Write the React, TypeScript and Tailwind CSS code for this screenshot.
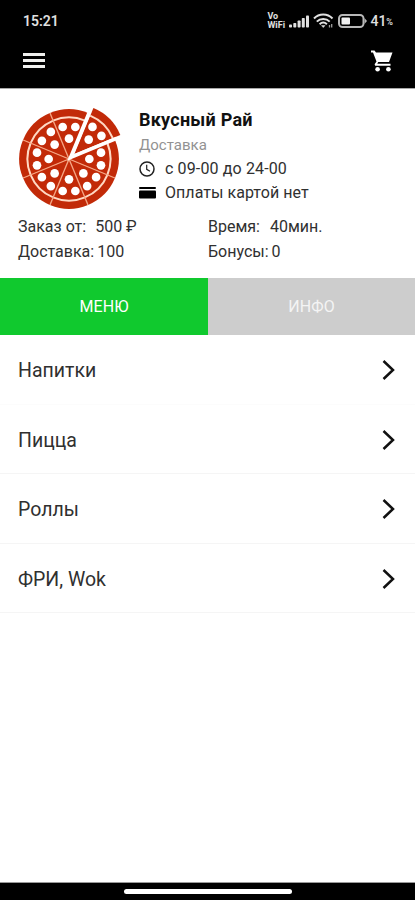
const categories = ["Напитки", "Пицца", "Роллы", "ФРИ, Wok"]

const slices = [0, 45, 90, 135, 180, 225, 270, 315]

function PizzaSlice() {
  return (
    <>
      <path d="M0 0 L-57 -138 A149 149 0 0 1 57 -138 Z" fill="#c22a08" />
      <path d="M-48 -115 A125 125 0 0 1 48 -115" fill="none" stroke="#ffd9c4" strokeWidth="6" />
      <circle cx="0" cy="-61" r="13" fill="#fff" />
      <circle cx="-19" cy="-96" r="13" fill="#fff" />
      <circle cx="19" cy="-96" r="13" fill="#fff" />
    </>
  )
}

function PizzaLogo() {
  return (
    <svg className="h-[106px] w-[106px] shrink-0" viewBox="-159 -159 318 318">
      {slices.map((angle) => {
        const shift = angle === 45 ? "translate(16 -15) " : ""
        return (
          <g key={angle} transform={`${shift}rotate(${angle})`}>
            <PizzaSlice />
          </g>
        )
      })}
      {/* cuts between the slices that stay in place */}
      {[112.5, 157.5, 202.5, 247.5, 292.5, 337.5].map((angle) => (
        <path key={angle} d="M0 0 V-149" stroke="#f5a583" strokeWidth="4" transform={`rotate(${angle})`} />
      ))}
      {/* gap around the pulled out slice */}
      <path d="M62 -143 L5 -5 L143 -62" fill="none" stroke="#fff" strokeWidth="11" />
    </svg>
  )
}

function StatusBar() {
  return (
    <div className="flex h-[41px] items-center justify-between pl-[23px] pr-[22px] text-[#e0e0e0]">
      <span className="text-[14px] font-semibold leading-none">15:21</span>
      <div className="flex items-center">
        <div className="w-[22px] text-[9px] font-bold leading-[8.5px]">
          <div>Vo</div>
          <div>WiFi</div>
        </div>
        <svg className="h-[14px] w-[20px]" viewBox="0 0 20 14" fill="currentColor">
          <rect x="0" y="10.5" width="3" height="3" rx="0.8" />
          <rect x="4.3" y="9" width="3" height="4.5" rx="0.8" />
          <rect x="8.6" y="6.5" width="3" height="7" rx="0.8" />
          <rect x="12.8" y="4" width="3" height="9.5" rx="0.8" />
          <rect x="17" y="1.5" width="3" height="12" rx="0.8" />
        </svg>
        <svg className="ml-[4px] h-[16px] w-[21px]" viewBox="0 0 21 16" fill="none" stroke="currentColor" strokeWidth="2">
          <path d="M1 5.5 C6 0.2 14.5 0.2 19.5 5.5" />
          <path d="M3.8 8.6 C7.3 5 13.2 5 16.7 8.6" />
          <path d="M6.6 11.3 C8.8 9.2 11.7 9.2 13.9 11.3" />
          <path d="M8.5 12.6 L10.25 14.6 L12 12.6 Z" fill="currentColor" strokeWidth="0.5" />
          <path d="M16.5 12 V14.5 M18.7 11 V14.5" strokeWidth="1.3" opacity="0.7" />
        </svg>
        <svg className="ml-[4px] h-[14px] w-[29px]" viewBox="0 0 29 14">
          <rect x="1" y="1" width="24.5" height="12" rx="3.5" fill="none" stroke="#b8b8b8" strokeWidth="2" />
          <rect x="3.5" y="3.5" width="8.5" height="7" rx="1" fill="#f0f0f0" />
          <path d="M26.5 4 L29 7 L26.5 10 Z" fill="#b8b8b8" />
        </svg>
        <span className="ml-[3px] text-[14px] font-medium leading-none">41</span>
        <span className="pt-[4px] text-[9px] font-medium leading-none">%</span>
      </div>
    </div>
  )
}

function CartIcon() {
  return (
    <svg className="h-[22px] w-[22px]" viewBox="0 0 22 22" fill="currentColor">
      <path d="M0 0.5 H3.5 L5 2.5 H21.5 L18 12 H7.2 L6.3 13.8 H19.5 V15.8 H4.2 L3.6 14.3 L5.5 11.5 L2 2.6 H0 Z" />
      <circle cx="6.6" cy="19.3" r="2.3" />
      <circle cx="17.4" cy="19.3" r="2.3" />
    </svg>
  )
}

export default function App() {
  return (
    <div className="flex h-[900px] w-[415px] flex-col overflow-hidden bg-white font-[Roboto,sans-serif] text-[#303030]">
      <header className="h-[89px] shrink-0 border-b border-[#a8a8a8] bg-black">
        <StatusBar />
        <div className="flex h-[39px] items-center justify-between pl-[23px] pr-[22px] text-white">
          <div className="flex w-[22px] flex-col gap-[3px]">
            <div className="h-[3px] bg-[#f0f0ee]" />
            <div className="h-[3px] bg-[#f0f0ee]" />
            <div className="h-[3px] bg-[#f0f0ee]" />
          </div>
          <CartIcon />
        </div>
      </header>

      <section className="h-[189px] shrink-0">
        <div className="flex h-[125px] pl-[16px] pt-[17px]">
          <PizzaLogo />
          <div className="ml-[17px]">
            <h1 className="h-[27px] text-[18px] font-bold leading-[27px] tracking-[0.25px] text-[#111]">Вкусный Рай</h1>
            <p className="h-[24px] text-[15px] leading-[24px] text-[#929292]">Доставка</p>
            <div className="flex h-[24px] items-center">
              <svg className="h-[16px] w-[16px]" viewBox="0 0 16 16" fill="none" stroke="#222" strokeWidth="1.5">
                <circle cx="8" cy="8" r="7" />
                <path d="M7.7 3.8 V8.3 L11 10.3" strokeWidth="1.2" />
              </svg>
              <span className="ml-[10px] text-[16px] tracking-[0.13px]">с 09-00 до 24-00</span>
            </div>
            <div className="flex h-[24px] items-center">
              <svg className="h-[12px] w-[17px]" viewBox="0 0 17 12">
                <rect width="17" height="2" rx="1" />
                <rect y="3.5" width="17" height="8" rx="1" />
              </svg>
              <span className="ml-[9px] text-[16px] tracking-[0.05px]">Оплаты картой нет</span>
            </div>
          </div>
        </div>
        <div className="grid grid-cols-[190px_1fr] pl-[18px] text-[16px] leading-[25px]">
          <div>Заказ от:<span className="ml-[9px]">500 ₽</span></div>
          <div>Время:<span className="ml-[10px]">40мин.</span></div>
          <div>Доставка:<span className="ml-[3px]">100</span></div>
          <div>Бонусы:<span className="ml-[3px]">0</span></div>
        </div>
      </section>

      <div className="flex h-[57px] shrink-0 text-[16px] text-white">
        <button className="w-[208px] bg-[#10c92e] pt-px tracking-[0.1px]">МЕНЮ</button>
        <button className="flex-1 bg-[#cdcdcd] pt-px text-[#f4f4f4] tracking-[0.1px]">ИНФО</button>
      </div>

      <main className="flex-1">
        {categories.map((name) => (
          <div key={name} className="flex h-[69.5px] items-center justify-between border-b border-[#f5f5f5] pl-[18px] pr-[20px] pt-[2px] first:border-[#fcfcfc]">
            <span className="pt-px text-[19.5px]">{name}</span>
            <svg className="h-[22px] w-[13px]" viewBox="0 0 13 22" fill="none" stroke="#111" strokeWidth="2.5">
              <path d="M1.5 2 L11 11 L1.5 20" />
            </svg>
          </div>
        ))}
      </main>

      <footer className="flex h-[18px] shrink-0 justify-center border-t border-[#999] bg-black pt-[6px]">
        <div className="h-[5px] w-[168px] rounded-full bg-white" />
      </footer>
    </div>
  )
}
